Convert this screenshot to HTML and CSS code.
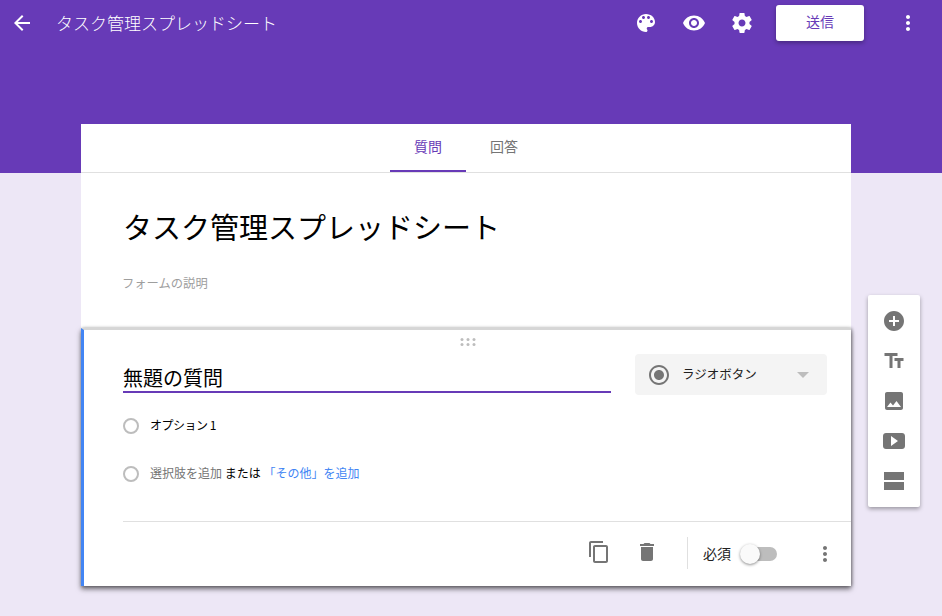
FILE: index.html
```html
<!DOCTYPE html>
<html lang="ja">
<head>
<meta charset="utf-8">
<title>タスク管理スプレッドシート</title>
<link rel="stylesheet" href="styles.css">
</head>
<body>
<header class="banner">
  <div class="toolbar">
    <svg class="back" viewBox="0 0 24 24"><path d="M20 11H7.83l5.59-5.59L12 4l-8 8 8 8 1.41-1.41L7.83 13H20v-2z"/></svg>
    <div class="doc-title">タスク管理スプレッドシート</div>
    <div class="tools">
      <svg class="tool" viewBox="0 0 24 24"><path d="M12 3c-4.97 0-9 4.03-9 9s4.03 9 9 9c.83 0 1.5-.67 1.5-1.5 0-.39-.15-.74-.39-1.01-.23-.26-.38-.61-.38-.99 0-.83.67-1.5 1.5-1.5H16c2.76 0 5-2.24 5-5 0-4.42-4.03-8-9-8zm-5.5 9c-.83 0-1.5-.67-1.5-1.5S5.67 9 6.5 9 8 9.67 8 10.5 7.33 12 6.5 12zm3-4C8.67 8 8 7.33 8 6.5S8.67 5 9.5 5s1.5.67 1.5 1.5S10.33 8 9.5 8zm5 0c-.83 0-1.5-.67-1.5-1.5S13.67 5 14.5 5s1.5.67 1.5 1.5S15.33 8 14.5 8zm3 4c-.83 0-1.5-.67-1.5-1.5S16.67 9 17.5 9s1.5.67 1.5 1.5-.67 1.5-1.5 1.5z"/></svg>
      <svg class="tool" viewBox="0 0 24 24"><path d="M12 4.5C7 4.5 2.73 7.61 1 12c1.73 4.39 6 7.5 11 7.5s9.27-3.11 11-7.5c-1.73-4.39-6-7.5-11-7.5zM12 17c-2.76 0-5-2.24-5-5s2.24-5 5-5 5 2.24 5 5-2.24 5-5 5zm0-8c-1.66 0-3 1.34-3 3s1.34 3 3 3 3-1.34 3-3-1.34-3-3-3z"/></svg>
      <svg class="tool" viewBox="0 0 24 24"><path d="M19.43 12.98c.04-.32.07-.64.07-.98s-.03-.66-.07-.98l2.11-1.65c.19-.15.24-.42.12-.64l-2-3.46c-.12-.22-.39-.3-.61-.22l-2.49 1c-.52-.4-1.08-.73-1.69-.98l-.38-2.65C14.46 2.18 14.25 2 14 2h-4c-.25 0-.46.18-.49.42l-.38 2.65c-.61.25-1.17.59-1.69.98l-2.49-1c-.23-.09-.49 0-.61.22l-2 3.46c-.13.22-.07.49.12.64l2.11 1.65c-.04.32-.07.65-.07.98s.03.66.07.98l-2.11 1.65c-.19.15-.24.42-.12.64l2 3.46c.12.22.39.3.61.22l2.49-1c.52.4 1.08.73 1.69.98l.38 2.65c.03.24.24.42.49.42h4c.25 0 .46-.18.49-.42l.38-2.65c.61-.25 1.17-.59 1.69-.98l2.49 1c.23.09.49 0 .61-.22l2-3.46c.12-.22.07-.49-.12-.64l-2.11-1.65zM12 15.5c-1.93 0-3.5-1.57-3.5-3.5s1.57-3.5 3.5-3.5 3.5 1.57 3.5 3.5-1.57 3.5-3.5 3.5z"/></svg>
    </div>
    <button class="send">送信</button>
    <svg class="tool more" viewBox="0 0 24 24"><path d="M12 8c1.1 0 2-.9 2-2s-.9-2-2-2-2 .9-2 2 .9 2 2 2zm0 2c-1.1 0-2 .9-2 2s.9 2 2 2 2-.9 2-2-.9-2-2-2zm0 6c-1.1 0-2 .9-2 2s.9 2 2 2 2-.9 2-2-.9-2-2-2z"/></svg>
  </div>
</header>

<main class="form">
  <nav class="tabs">
    <a class="tab tab-active">質問</a>
    <a class="tab">回答</a>
  </nav>

  <section class="title-card">
    <h1 class="form-title">タスク管理スプレッドシート</h1>
    <p class="form-desc">フォームの説明</p>
  </section>

  <section class="question">
    <div class="handle">
      <svg viewBox="0 0 16 8" class="handle-dots"><circle cx="2" cy="1.5" r="1.5"/><circle cx="8" cy="1.5" r="1.5"/><circle cx="14" cy="1.5" r="1.5"/><circle cx="2" cy="6.5" r="1.5"/><circle cx="8" cy="6.5" r="1.5"/><circle cx="14" cy="6.5" r="1.5"/></svg>
    </div>
    <div class="q-head">
      <div class="q-title">無題の質問</div>
      <div class="q-type">
        <svg class="type-icon" viewBox="0 0 24 24"><path d="M12 7c-2.76 0-5 2.24-5 5s2.24 5 5 5 5-2.24 5-5-2.24-5-5-5zm0-5C6.48 2 2 6.48 2 12s4.48 10 10 10 10-4.48 10-10S17.52 2 12 2zm0 18c-4.42 0-8-3.58-8-8s3.58-8 8-8 8 3.58 8 8-3.58 8-8 8z"/></svg>
        <span class="type-label">ラジオボタン</span>
        <span class="type-arrow"></span>
      </div>
    </div>
    <ul class="options">
      <li class="option"><span class="radio"></span><span class="option-first">オプション 1</span></li>
      <li class="option"><span class="radio"></span><span class="option-text"><span class="muted">選択肢を追加</span> または <span class="link">「その他」を追加</span></span></li>
    </ul>
    <div class="q-foot">
      <svg class="foot-icon" viewBox="0 0 24 24"><path d="M16 1H4c-1.1 0-2 .9-2 2v14h2V3h12V1zm3 4H8c-1.1 0-2 .9-2 2v14c0 1.1.9 2 2 2h11c1.1 0 2-.9 2-2V7c0-1.1-.9-2-2-2zm0 16H8V7h11v14z"/></svg>
      <svg class="foot-icon" viewBox="0 0 24 24"><path d="M6 19c0 1.1.9 2 2 2h8c1.1 0 2-.9 2-2V7H6v12zM19 4h-3.5l-1-1h-5l-1 1H5v2h14V4z"/></svg>
      <span class="foot-sep"></span>
      <span class="req-label">必須</span>
      <span class="switch"><span class="knob"></span></span>
      <svg class="foot-more" viewBox="0 0 24 24"><path d="M12 8c1.1 0 2-.9 2-2s-.9-2-2-2-2 .9-2 2 .9 2 2 2zm0 2c-1.1 0-2 .9-2 2s.9 2 2 2 2-.9 2-2-.9-2-2-2zm0 6c-1.1 0-2 .9-2 2s.9 2 2 2 2-.9 2-2-.9-2-2-2z"/></svg>
    </div>
  </section>
</main>

<aside class="palette">
  <svg viewBox="0 0 24 24"><path d="M12 2C6.48 2 2 6.48 2 12s4.48 10 10 10 10-4.48 10-10S17.52 2 12 2zm5 11h-4v4h-2v-4H7v-2h4V7h2v4h4v2z"/></svg>
  <svg viewBox="0 0 24 24"><path d="M2.5 4v3h5v12h3V7h5V4h-13zm19 5h-9v3h3v7h3v-7h3V9z"/></svg>
  <svg viewBox="0 0 24 24"><path d="M21 19V5c0-1.1-.9-2-2-2H5c-1.1 0-2 .9-2 2v14c0 1.1.9 2 2 2h14c1.1 0 2-.9 2-2zM8.5 13.5l2.5 3.01L14.5 12l4.5 6H5l3.5-4.5z"/></svg>
  <svg viewBox="0 0 24 24"><path d="M20 4H4C2.3 4 1 5.3 1 7v10c0 1.7 1.3 3 3 3h16c1.7 0 3-1.3 3-3V7c0-1.7-1.3-3-3-3zM9 17V7l7 5-7 5z"/></svg>
  <svg viewBox="0 0 24 24"><path d="M2 3h20v8H2zM2 13h20v8H2z"/></svg>
</aside>
</body>
</html>
```
FILE: styles.css
```css
* { box-sizing: border-box; }
html, body { height: 100%; }
body {
  margin: 0;
  background: #ede7f6;
  color: #000;
  font-family: "Noto Sans CJK JP", "Noto Sans", "Liberation Sans", sans-serif;
  overflow: hidden;
  position: relative;
}
.banner { height: 173px; background: #673ab7; }
.toolbar { display: flex; align-items: center; height: 46px; padding-left: 10px; }
.back { width: 24px; height: 24px; fill: #fff; flex: none; }
.doc-title { margin-left: 22px; flex: 1; color: #fff; font-size: 17px; font-weight: 300; line-height: 46px; }
.tools { display: flex; gap: 24px; margin-right: 22px; }
.tool { width: 24px; height: 24px; fill: #fff; flex: none; }
.send {
  width: 88px; height: 36px; padding: 0 0 4px; border: 0; border-radius: 3px;
  background: #fff; color: #673ab7; font: inherit; font-size: 14px;
  box-shadow: 0 2px 4px rgba(0,0,0,.3);
}
.tool.more { margin: 0 22px 0 32px; }

.form { width: 770px; margin: -49px 0 0 81px; position: relative; }
.tabs {
  display: flex; justify-content: center; height: 49px; background: #fff;
  border-bottom: 1px solid #e0e0e0;
}
.tab {
  width: 76px; height: 48px; display: flex; align-items: center; justify-content: center;
  padding-bottom: 5px; font-size: 14px; color: #757575;
}
.tab-active { color: #673ab7; border-bottom: 2px solid #673ab7; padding-bottom: 3px; }

.title-card { height: 155px; background: #fff; padding: 32px 0 0 41px; }
.form-title { margin: 0 0 0 1px; font-size: 29px; font-weight: 400; line-height: 42px; }
.form-desc { margin: 27px 0 0; font-size: 12.3px; line-height: 18px; color: #9e9e9e; }

.question {
  height: 258px; background: #fff; border-left: 3px solid #4285f4;
  border-top: 2px solid #d6d6d6;
  box-shadow: 0 3px 5px rgba(0,0,0,.55), 1px 0 3px rgba(0,0,0,.3);
  position: relative;
}
.handle { height: 24px; display: flex; justify-content: center; padding-top: 8px; }
.handle-dots { width: 16px; height: 8px; fill: #bdbdbd; }
.q-head { display: flex; padding-left: 39px; }
.q-title {
  width: 488px; height: 39px; font-size: 20px; line-height: 48px; overflow: visible;
  border-bottom: 2px solid #673ab7;
}
.q-type {
  width: 192px; height: 41px; margin-left: 24px; display: flex; align-items: center;
  padding-left: 12px; background: #f4f4f4; border-radius: 4px;
}
.type-icon { width: 24px; height: 24px; fill: #757575; flex: none; }
.type-label { margin: 0 0 3px 11px; font-size: 12.5px; color: #212121; }
.type-arrow {
  margin-left: 40px; width: 0; height: 0;
  border-left: 6px solid transparent; border-right: 6px solid transparent;
  border-top: 6px solid #bdbdbd;
}
.options { list-style: none; margin: 7px 0 0; padding: 0 0 0 39px; }
.option { height: 48px; display: flex; align-items: center; font-size: 12px; }
.radio { width: 16px; height: 16px; border: 2px solid #bdbdbd; border-radius: 50%; margin-right: 11px; flex: none; }
.option-first { margin-bottom: 3px; letter-spacing: -.5px; }
.option-text { margin-bottom: 3px; }
.muted { color: #757575; }
.link { color: #4285f4; }
.q-foot {
  display: flex; align-items: center; height: 65px; margin: 23px 0 0 39px;
  border-top: 1px solid #e0e0e0; position: relative;
}
.foot-icon { width: 24px; height: 24px; fill: #757575; flex: none; margin-bottom: 4px; }
.foot-icon:first-child { margin-left: 464px; }
.foot-icon + .foot-icon { margin-left: 24px; }
.foot-sep { width: 1px; height: 32px; background: #e0e0e0; margin: 0 0 3px 28px; }
.req-label { margin: 0 0 3px 15px; font-size: 14px; color: #212121; }
.switch { position: relative; width: 35px; height: 14px; margin-left: 11px; border-radius: 7px; background: #bdbdbd; }
.knob {
  position: absolute; left: -2px; top: -3px; width: 20px; height: 20px; border-radius: 50%;
  background: #fafafa; box-shadow: 0 1px 3px rgba(0,0,0,.45);
}
.foot-more { width: 24px; height: 24px; fill: #757575; margin-left: 36px; flex: none; }

.palette {
  position: absolute; left: 868px; top: 295px; width: 52px; height: 212px;
  display: flex; flex-direction: column; align-items: center; gap: 16px; padding-top: 14px;
  background: #fff; border-radius: 2px; box-shadow: 0 2px 4px rgba(0,0,0,.35);
}
.palette svg { width: 24px; height: 24px; fill: #757575; flex: none; }
```
